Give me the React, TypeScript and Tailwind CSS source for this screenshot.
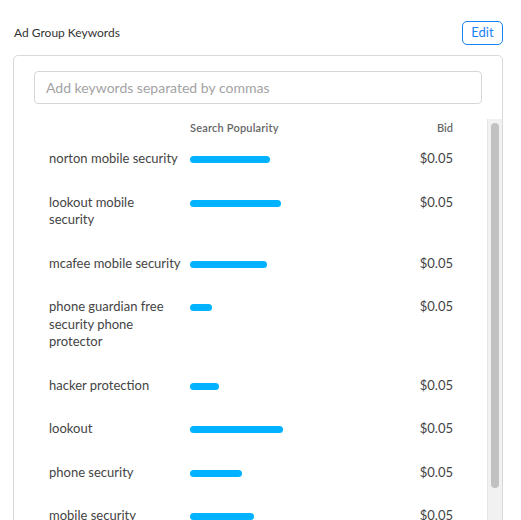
import React from 'react'

type Keyword = {
  text: string
  popularity: number
  bid: string
}

const keywords: Keyword[] = [
  { text: 'norton mobile security', popularity: 80, bid: '$0.05' },
  { text: 'lookout mobile security', popularity: 91, bid: '$0.05' },
  { text: 'mcafee mobile security', popularity: 77, bid: '$0.05' },
  { text: 'phone guardian free security phone protector', popularity: 22, bid: '$0.05' },
  { text: 'hacker protection', popularity: 29, bid: '$0.05' },
  { text: 'lookout', popularity: 93, bid: '$0.05' },
  { text: 'phone security', popularity: 52, bid: '$0.05' },
  { text: 'mobile security', popularity: 64, bid: '$0.05' },
]

export default function App() {
  return (
    <div
      className="w-[521px] h-[520px] overflow-hidden bg-white pl-[13px] pr-[18px] pt-[21px]"
      style={{ fontFamily: 'Lato, "Open Sans", sans-serif' }}
    >
      {/* Header */}
      <div className="flex items-center justify-between h-[24px] pl-px">
        <h2 className="m-0 text-[12px] font-normal text-[#333]">Ad Group Keywords</h2>
        <button className="h-[24px] w-[41px] rounded-[5px] border border-[#1a83f5] bg-white text-[13px] text-[#1a83f5]">
          Edit
        </button>
      </div>

      {/* Card */}
      <div className="mt-[10px] h-[470px] rounded-[5px] border border-[#d9d9d9] flex flex-col overflow-hidden">
        <div className="px-[20px] pt-[15px] pb-[15px]">
          <input
            className="w-full h-[33px] rounded-[4px] border border-[#d6d6d6] px-[11px] text-[14px] text-[#333] placeholder:text-[#a3a3a3] outline-none"
            placeholder="Add keywords separated by commas"
          />
        </div>

        <div className="flex flex-1 min-h-0">
          <div className="flex-1 pl-[35px] pr-[34px] overflow-hidden">
            <div className="grid grid-cols-[141px_1fr_auto] h-[18px] items-center text-[11px] text-[#666] font-semibold">
              <span />
              <span className="tracking-[0.2px]">Search Popularity</span>
              <span className="text-right">Bid</span>
            </div>
            {keywords.map((k, i) => (
              <div
                key={i}
                className="grid grid-cols-[141px_1fr_auto] items-start pt-[13px] pb-[13px] text-[13px] leading-[17.5px] text-[#444]"
              >
                <span className="pr-[8px]">{k.text}</span>
                <div className="pt-[6px]">
                  <div
                    className="h-[7px] rounded-full bg-[#00b2ff]"
                    style={{ width: k.popularity }}
                  />
                </div>
                <span className="text-right">{k.bid}</span>
              </div>
            ))}
          </div>

          {/* Scrollbar */}
          <div className="w-[15px] bg-[#f1f1f1] border-l border-[#e6e6e6] pt-[4px] px-[3px]">
            <div className="h-[365px] rounded-full bg-[#c1c1c1]" />
          </div>
        </div>
      </div>
    </div>
  )
}
